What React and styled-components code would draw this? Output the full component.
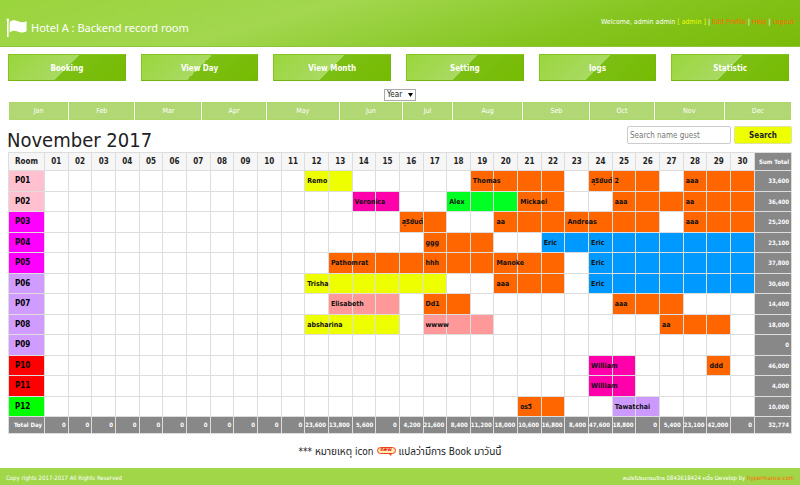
import React from 'react';
import styled, { createGlobalStyle } from 'styled-components';

const ORANGE = '#ff6600';
const YELLOW = '#eeff00';
const PINK = '#ff00aa';
const ROSE = '#ff9999';
const GREEN = '#00ff22';
const BLUE = '#0099ff';
const LILAC = '#cc99ff';

const NAV = ['Booking', 'View Day', 'View Month', 'Setting', 'logs', 'Statistic'];
const MONTHS = ['Jan', 'Feb', 'Mar', 'Apr', 'May', 'Jun', 'Jul', 'Aug', 'Seb', 'Oct', 'Nov', 'Dec'];
const DAYS = Array.from({ length: 30 }, (_, i) => String(i + 1).padStart(2, '0'));

/* Each booking: [first day, number of days, guest, colour] */
const ROOMS = [
  { id: 'P01', tint: '#ffc0d0', sum: '33,600', stays: [[12, 2, 'Remo', YELLOW], [19, 4, 'Thomas', ORANGE], [24, 3, 'สุริยันต์ 2', ORANGE], [28, 3, 'aaa', ORANGE]] },
  { id: 'P02', tint: '#ffc0d0', sum: '36,400', stays: [[14, 2, 'Veronica', PINK], [18, 3, 'Alex', GREEN], [21, 2, 'Mickael', ORANGE], [25, 3, 'aaa', ORANGE], [28, 3, 'aa', ORANGE]] },
  { id: 'P03', tint: '#ff00ff', sum: '25,200', stays: [[16, 2, 'สุริยันต์', ORANGE], [20, 3, 'aa', ORANGE], [23, 4, 'Andreas', ORANGE], [28, 3, 'aaa', ORANGE]] },
  { id: 'P04', tint: '#ff00ff', sum: '23,100', stays: [[17, 3, 'ggg', ORANGE], [22, 2, 'Eric', BLUE], [24, 7, 'Eric', BLUE]] },
  { id: 'P05', tint: '#ff00ff', sum: '37,800', stays: [[13, 4, 'Pathomrat', ORANGE], [17, 3, 'hhh', ORANGE], [20, 3, 'Manoke', ORANGE], [24, 7, 'Eric', BLUE]] },
  { id: 'P06', tint: '#d09cff', sum: '30,600', stays: [[12, 6, 'Trisha', YELLOW], [20, 3, 'aaa', ORANGE], [24, 7, 'Eric', BLUE]] },
  { id: 'P07', tint: '#d09cff', sum: '14,400', stays: [[13, 3, 'Elisabeth', ROSE], [17, 2, 'Dd1', ORANGE], [25, 3, 'aaa', ORANGE]] },
  { id: 'P08', tint: '#d09cff', sum: '18,000', stays: [[12, 4, 'absharina', YELLOW], [17, 3, 'wwww', ROSE], [27, 3, 'aa', ORANGE]] },
  { id: 'P09', tint: '#d09cff', sum: '0', stays: [] },
  { id: 'P10', tint: '#ff0000', sum: '46,000', stays: [[24, 2, 'William', PINK], [29, 1, 'ddd', ORANGE]] },
  { id: 'P11', tint: '#ff0000', sum: '4,000', stays: [[24, 2, 'William', PINK]] },
  { id: 'P12', tint: '#00ff00', sum: '10,000', stays: [[21, 2, 'อรวี', ORANGE], [25, 2, 'Tawatchai', LILAC]] },
];

const TOTALS = ['0', '0', '0', '0', '0', '0', '0', '0', '0', '0', '0', '23,600', '13,800', '5,600', '0', '4,200', '21,600', '8,400', '11,200', '18,000', '10,600', '16,800', '8,400', '47,600', '18,800', '0', '5,400', '23,100', '42,000', '0'];

const Global = createGlobalStyle`
  * { box-sizing: border-box; }
  body {
    margin: 0;
    background: #fff;
    color: #222;
    font-family: Tahoma, "DejaVu Sans Condensed", "Noto Sans Thai", "DejaVu Sans", sans-serif;
    font-size: 8px;
  }
  a { text-decoration: none; }
  button, input, select { font-family: inherit; margin: 0; }
`;

const Header = styled.header`
  display: flex;
  align-items: center;
  justify-content: space-between;
  height: 47px;
  padding: 9px 6px 0;
  background: linear-gradient(165deg, #9ad43c 0%, #a2d74f 36%, #84c41d 72%, #7aba08 100%);
  border-bottom: 1px solid #8cc638;
`;

const Brand = styled.h1`
  display: flex;
  align-items: center;
  gap: 4px;
  margin: 0;
  color: #fff;
  font-family: "Noto Sans", sans-serif;
  font-size: 11px;
  font-weight: 400;
  line-height: 18px;
`;

const Account = styled.div`
  color: #fff;
  font-size: 7px;
  line-height: 10px;
  padding-bottom: 11px;
  white-space: pre;
`;

const Role = styled.span`
  color: #eeff00;
`;

const OrangeLink = styled.a`
  color: #ff6600;
`;

const Nav = styled.nav`
  display: grid;
  grid-template-columns: repeat(6, 1fr);
  gap: 15px;
  padding: 7px 11px 8px 8px;
`;

const NavLink = styled.a`
  height: 27px;
  border: 1px solid #86c41f;
  border-right-color: #74b510;
  border-bottom-color: #74b510;
  background: linear-gradient(135deg, #9ad63c 0%, #a9da62 50%, #7cbf14 50%, #76bb02 100%);
  color: #fff;
  font-size: 8px;
  font-weight: 700;
  line-height: 27px;
  text-align: center;
`;

const YearField = styled.label`
  display: block;
  position: relative;
  width: 32px;
  height: 12px;
  margin: 0 auto 1px;
`;

const YearSelect = styled.select`
  display: block;
  width: 100%;
  height: 100%;
  padding: 0 2px;
  appearance: none;
  border: 1px solid #aaa;
  border-radius: 0;
  background: #fff;
  color: #222;
  font-size: 8px;
  line-height: 10px;
`;

const Arrow = styled.svg`
  position: absolute;
  top: 4px;
  right: 3px;
  width: 5px;
  height: 4px;
  pointer-events: none;
`;

const MonthBar = styled.nav`
  display: grid;
  grid-template-columns: 59fr 65fr 66fr 63fr 72fr 62fr 49fr 69fr 66fr 63fr 69fr 66fr;
  gap: 1px;
  padding: 0 9px;
`;

const MonthLink = styled.a`
  height: 18px;
  border: 1px solid #acd868;
  background: #b2d876;
  color: #fff;
  font-size: 7px;
  line-height: 17px;
  text-align: center;
`;

const Heading = styled.div`
  display: flex;
  align-items: flex-start;
  justify-content: space-between;
  height: 32px;
  padding: 6px 8px 0 7px;
`;

const Title = styled.h2`
  margin: 0;
  font-size: 20px;
  font-weight: 400;
  line-height: 28px;
`;

const SearchForm = styled.form`
  display: flex;
  gap: 3px;
`;

const SearchInput = styled.input`
  width: 104px;
  height: 18px;
  padding: 0 2px;
  border: 1px solid #ccc;
  border-radius: 2px;
  font-size: 8px;
  &::placeholder { color: #777; opacity: 1; }
`;

const SearchButton = styled.button`
  width: 58px;
  height: 18px;
  padding: 0;
  border: 1px solid #dde4a0;
  border-radius: 2px;
  background: #eeff00;
  color: #222;
  font-size: 8px;
  font-weight: 700;
`;

const Main = styled.main`
  padding: 0 8px;
`;

const Calendar = styled.table`
  width: 100%;
  table-layout: fixed;
  border-collapse: collapse;
  tbody tr { height: 20px; }
  tbody tr:nth-child(odd) { height: 21px; }
`;

const EdgeCol = styled.col`
  width: ${(p) => p.$width};
`;

const DayHead = styled.th`
  height: 18px;
  padding: 0;
  border: 1px solid #ddd;
  background: #f6f6f6;
  color: #222;
  font-size: 8px;
  line-height: 10px;
`;

const RoomHead = styled.th`
  padding: 0 0 0 6px;
  border: 1px solid #ddd;
  background: ${(p) => p.$tint};
  color: #000;
  font-size: 8px;
  line-height: 10px;
  text-align: left;
`;

const Day = styled.td`
  padding: 0 0 0 2px;
  border: 1px solid #ddd;
  background: ${(p) => p.$fill || '#fff'};
  color: #111;
  font-size: 7px;
  font-weight: 700;
  line-height: 10px;
  white-space: nowrap;
`;

const Sum = styled.td`
  height: 17px;
  padding: 0 2px 0 0;
  border: 1px solid #ddd;
  background: #888;
  color: #fff;
  font-size: 6px;
  font-weight: 700;
  line-height: 8px;
  text-align: right;
  white-space: nowrap;
`;

const Note = styled.p`
  display: flex;
  align-items: center;
  justify-content: center;
  gap: 3px;
  margin: 10px 0 9px;
  font-size: 10px;
  line-height: 15px;
`;

const Footer = styled.footer`
  display: flex;
  align-items: center;
  justify-content: space-between;
  height: 18px;
  padding: 2px 6px 0;
  background: #a0d648;
  color: #fff;
  font-size: 6px;
  line-height: 10px;
`;

function Flag() {
  return (
    <svg width="21" height="20" viewBox="0 0 21 20" fill="#fff" aria-hidden="true">
      <path d="M1 2.2V19h1.6V2.2z" />
      <circle cx="1.8" cy="1.8" r="1.3" />
      <path d="M3.6 3.8C6 1.8 9 1.8 12 3.2s5.500 1.400 8.600 0v10c-3 1.600-6 1.600-9 .3s-5.500-1.100-8 .9z" />
    </svg>
  );
}

const NewBubble = styled.span`
  display: inline-flex;
  position: relative;
  align-items: center;
  justify-content: center;
  width: 19px;
  height: 7px;
  border: 1px solid #f04020;
  border-radius: 4px;
  background: #ffeeb0;
  color: #e81010;
  font-family: "DejaVu Sans", sans-serif;
  font-size: 5px;
  font-weight: 700;
  line-height: 5px;
  padding-bottom: 1px;
  margin-bottom: 3px;
`;

const BubbleTail = styled.svg`
  position: absolute;
  right: 3px;
  top: 5px;
  width: 4px;
  height: 3px;
`;

function RoomRow({ room }) {
  const cells = DAYS.map((d, i) => {
    const n = i + 1;
    const stay = room.stays.find(([start, len]) => n >= start && n < start + len);
    return (
      <Day key={d} $fill={stay && stay[3]}>
        {stay && stay[0] === n ? stay[2] : null}
      </Day>
    );
  });
  return (
    <tr>
      <RoomHead scope="row" $tint={room.tint}>{room.id}</RoomHead>
      {cells}
      <Sum>{room.sum}</Sum>
    </tr>
  );
}

export default function App() {
  return (
    <>
      <Global />
      <Header>
        <Brand><Flag />Hotel A : Backend record room</Brand>
        <Account>
          Welcome, admin admin <Role>[ admin ]</Role> | <OrangeLink href="#profile">Edit Profile</OrangeLink> | <OrangeLink href="#help">Help</OrangeLink> | <OrangeLink href="#logout">Logout</OrangeLink>
        </Account>
      </Header>
      <Nav>
        {NAV.map((n) => <NavLink key={n} href="#">{n}</NavLink>)}
      </Nav>
      <YearField>
        <YearSelect aria-label="Year" defaultValue="Year"><option>Year</option></YearSelect>
        <Arrow viewBox="0 0 5 4"><path d="M0 0h5L2.500 4z" fill="#000" /></Arrow>
      </YearField>
      <MonthBar>
        {MONTHS.map((m) => <MonthLink key={m} href="#">{m}</MonthLink>)}
      </MonthBar>
      <Heading>
        <Title>November 2017</Title>
        <SearchForm onSubmit={(e) => e.preventDefault()}>
          <SearchInput type="text" aria-label="Search name guest" placeholder="Search name guest" />
          <SearchButton type="submit">Search</SearchButton>
        </SearchForm>
      </Heading>
      <Main>
        <Calendar>
          <colgroup>
            <EdgeCol $width="36px" />
            {DAYS.map((d) => <col key={d} />)}
            <EdgeCol $width="37px" />
          </colgroup>
          <thead>
            <tr>
              <DayHead scope="col">Room</DayHead>
              {DAYS.map((d) => <DayHead key={d} scope="col">{d}</DayHead>)}
              <Sum as="th" scope="col">Sum Total</Sum>
            </tr>
          </thead>
          <tbody>
            {ROOMS.map((r) => <RoomRow key={r.id} room={r} />)}
          </tbody>
          <tfoot>
            <tr>
              <Sum as="th" scope="row">Total Day</Sum>
              {TOTALS.map((t, i) => <Sum key={DAYS[i]}>{t}</Sum>)}
              <Sum>32,774</Sum>
            </tr>
          </tfoot>
        </Calendar>
        <Note>
          <span>*** หมายเหตุ icon</span>
          <NewBubble>
            new
            <BubbleTail viewBox="0 0 4 3"><path d="M0 0h4L3 3z" fill="#f04020" /></BubbleTail>
          </NewBubble>
          <span>แปลว่ามีการ Book มาวันนี้</span>
        </Note>
      </Main>
      <Footer>
        <span>Copy rights 2017-2017 All Rights Reserved</span>
        <span>สนใจโปรแกรมโทร 0843618424 หนึ่ง Develop by <OrangeLink href="#hypermance">hypermance.com</OrangeLink></span>
      </Footer>
    </>
  );
}
